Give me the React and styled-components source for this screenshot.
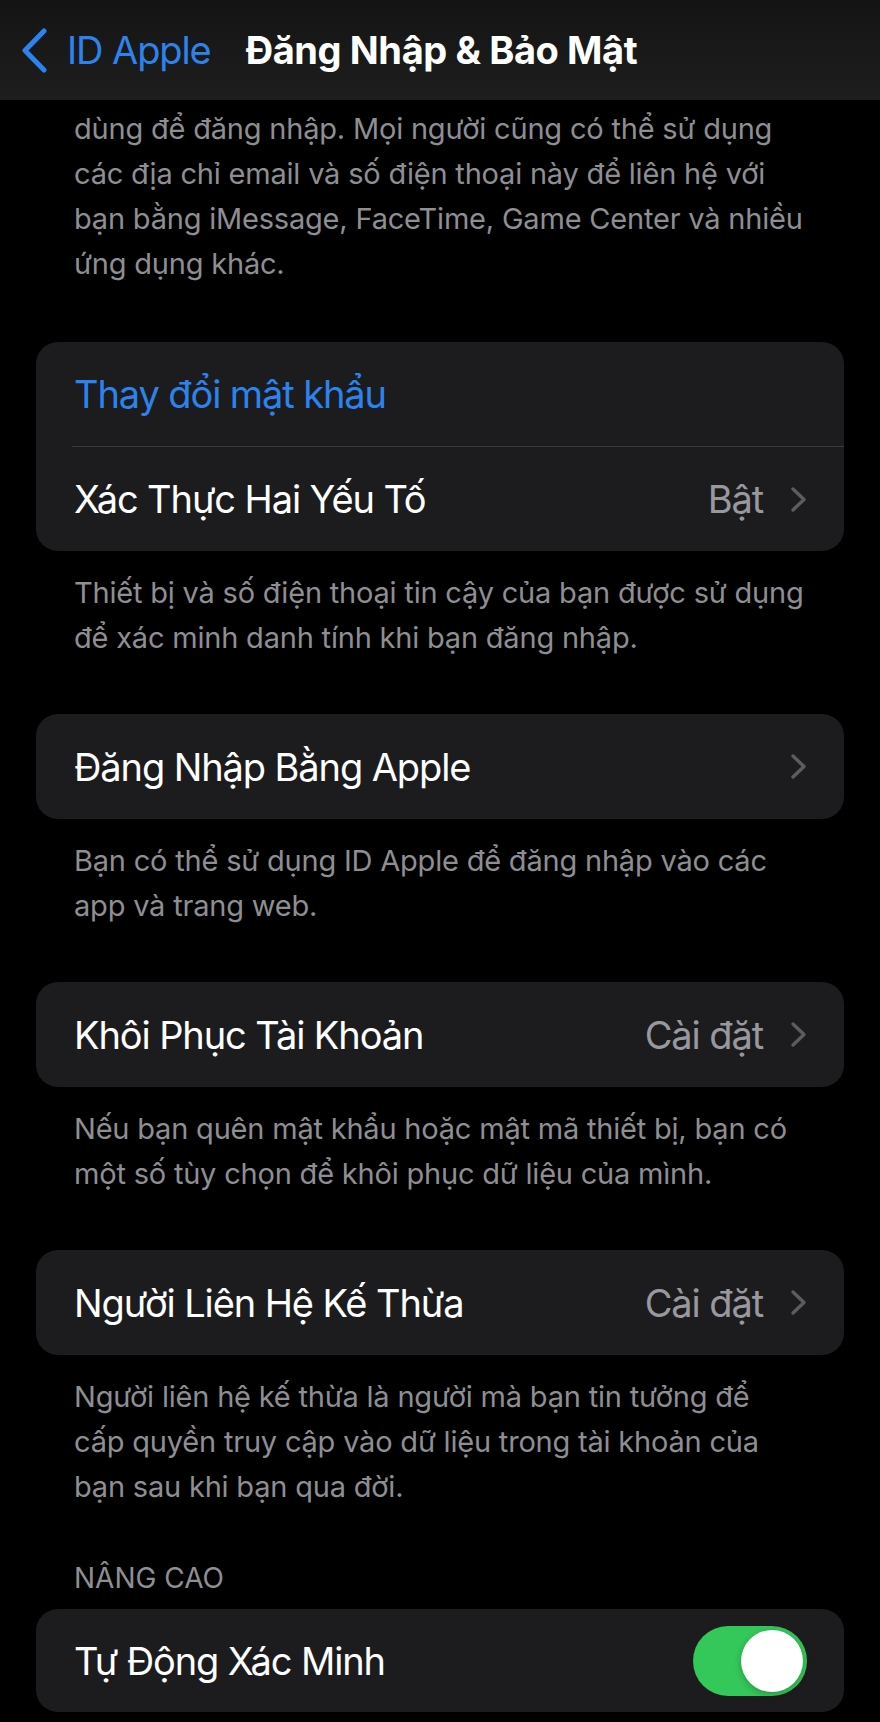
import React from 'react'
import styled, { createGlobalStyle } from 'styled-components'

const GlobalStyle = createGlobalStyle`
    body {
        margin: 0;
        background: #000;
        font-family: Inter, "Noto Sans", "Liberation Sans", sans-serif;
        -webkit-font-smoothing: antialiased;
    }
`

const Page = styled.div`
    width: 880px;
    min-height: 1722px;
    background: #000;
    overflow: hidden;
`

const NavBar = styled.header`
    height: 100px;
    display: flex;
    align-items: center;
    padding: 0 0 0 21px;
    background: linear-gradient(#141414, #1e1e1e);
    box-sizing: border-box;
`

const BackButton = styled.div`
    display: flex;
    align-items: center;
    gap: 19px;
    color: #2d83ec;
    font-size: 38px;
    letter-spacing: -1.1px;

    svg {
        display: block;
    }
`

const NavTitle = styled.h1`
    margin: 0 0 0 35px;
    font-size: 38px;
    font-weight: 700;
    color: #fff;
    letter-spacing: -0.4px;
`

const Content = styled.main`
    padding: 6px 36px 0;
`

const Footer = styled.p`
    margin: ${({ $top }) => ($top ? '0' : '19px')} 0 0;
    padding: 0 10px 0 38px;
    font-size: 29px;
    line-height: 45px;
    color: #8e8e93;
    letter-spacing: -0.2px;
`

const Card = styled.section`
    margin-top: ${({ $gap }) => $gap}px;
    background: #1c1c1e;
    border-radius: 22px;
    overflow: hidden;
`

const Row = styled.div`
    height: ${({ $h }) => $h || 105}px;
    display: flex;
    align-items: center;
    justify-content: space-between;
    padding: 0 37px 0 38px;
    font-size: 38px;
    letter-spacing: -1.1px;
    color: ${({ $link }) => ($link ? '#2d83ec' : '#fff')};
`

const Separator = styled.div`
    height: 1px;
    margin-left: 36px;
    background: #38383a;
`

const Value = styled.div`
    display: flex;
    align-items: center;
    gap: 27px;
    color: #98989e;
`

const SectionHeader = styled.div`
    margin-top: 51px;
    padding-left: 38px;
    font-size: 28px;
    line-height: 36px;
    color: #8e8e93;
    text-transform: uppercase;
`

const Switch = styled.div`
    width: 114px;
    height: 70px;
    border-radius: 35px;
    background: ${({ $on }) => ($on ? '#34c759' : '#39393d')};
    padding: 4px;
    box-sizing: border-box;
    display: flex;
    justify-content: ${({ $on }) => ($on ? 'flex-end' : 'flex-start')};
`

const Knob = styled.div`
    width: 62px;
    height: 62px;
    border-radius: 50%;
    background: #fff;
    box-shadow: 0 2px 6px rgba(0, 0, 0, 0.25);
`

const Chevron = () => (
    <svg width="17" height="27" viewBox="0 0 17 27">
        <path d="M3 3l11 10.5L3 24" fill="none" stroke="#5c5c60" strokeWidth="3.4" strokeLinecap="round" strokeLinejoin="round" />
    </svg>
)

const BackChevron = () => (
    <svg width="27" height="45" viewBox="0 0 27 45">
        <path d="M23 3L4 22.5 23 42" fill="none" stroke="#2d83ec" strokeWidth="5" strokeLinecap="round" strokeLinejoin="round" />
    </svg>
)

const App = () => {
    return (
        <Page>
            <GlobalStyle />
            <NavBar>
                <BackButton>
                    <BackChevron />
                    <span>ID Apple</span>
                </BackButton>
                <NavTitle>Đăng Nhập &amp; Bảo Mật</NavTitle>
            </NavBar>
            <Content>
                <Footer $top>
                    dùng để đăng nhập. Mọi người cũng có thể sử dụng<br />
                    các địa chỉ email và số điện thoại này để liên hệ với<br />
                    bạn bằng iMessage, FaceTime, Game Center và nhiều<br />
                    ứng dụng khác.
                </Footer>

                <Card $gap={56}>
                    <Row $link $h={104}>Thay đổi mật khẩu</Row>
                    <Separator />
                    <Row $h={104}>
                        Xác Thực Hai Yếu Tố
                        <Value>Bật<Chevron /></Value>
                    </Row>
                </Card>
                <Footer>
                    Thiết bị và số điện thoại tin cậy của bạn được sử dụng<br />
                    để xác minh danh tính khi bạn đăng nhập.
                </Footer>

                <Card $gap={54}>
                    <Row>
                        Đăng Nhập Bằng Apple
                        <Value><Chevron /></Value>
                    </Row>
                </Card>
                <Footer>
                    Bạn có thể sử dụng ID Apple để đăng nhập vào các<br />
                    app và trang web.
                </Footer>

                <Card $gap={54}>
                    <Row>
                        Khôi Phục Tài Khoản
                        <Value>Cài đặt<Chevron /></Value>
                    </Row>
                </Card>
                <Footer>
                    Nếu bạn quên mật khẩu hoặc mật mã thiết bị, bạn có<br />
                    một số tùy chọn để khôi phục dữ liệu của mình.
                </Footer>

                <Card $gap={54}>
                    <Row>
                        Người Liên Hệ Kế Thừa
                        <Value>Cài đặt<Chevron /></Value>
                    </Row>
                </Card>
                <Footer>
                    Người liên hệ kế thừa là người mà bạn tin tưởng để<br />
                    cấp quyền truy cập vào dữ liệu trong tài khoản của<br />
                    bạn sau khi bạn qua đời.
                </Footer>

                <SectionHeader>Nâng cao</SectionHeader>
                <Card $gap={13}>
                    <Row $h={103}>
                        Tự Động Xác Minh
                        <Switch $on><Knob /></Switch>
                    </Row>
                </Card>
            </Content>
        </Page>
    )
}

export default App
